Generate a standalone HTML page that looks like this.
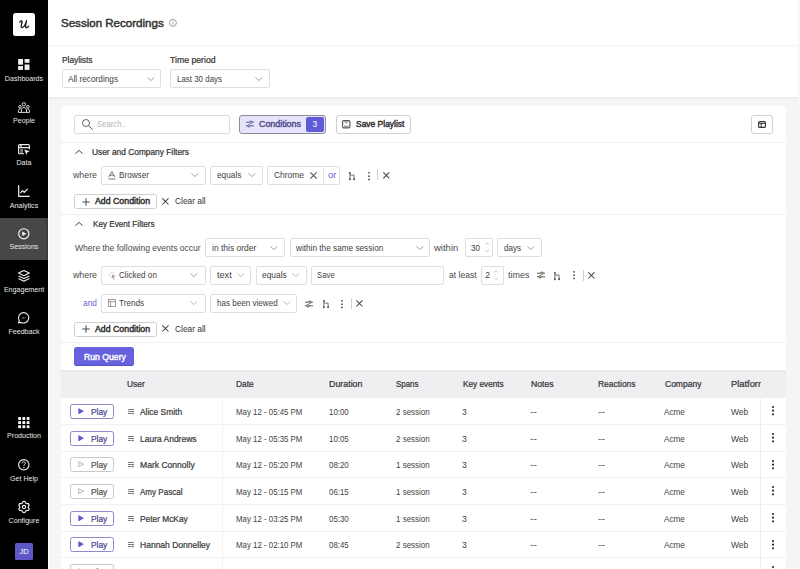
<!DOCTYPE html><html><head><meta charset="utf-8"><style>
*{box-sizing:border-box;margin:0;padding:0}
html,body{width:800px;height:569px;overflow:hidden;background:#f5f5f6;font-family:"Liberation Sans",sans-serif;color:#333}
.a{position:absolute}
.t{position:absolute;white-space:nowrap;font-size:8.1px;line-height:10px;color:#424242}
.b{font-weight:400;color:#333;-webkit-text-stroke:0.22px currentColor}
svg{position:absolute;overflow:visible}
.lb{position:absolute;left:0;width:48px;text-align:center;font-size:7.1px;line-height:9px;color:#e8e8e8;white-space:nowrap}
.box{position:absolute;background:#fff;border:1px solid #dfdfe1;border-radius:2px}
.hr{position:absolute;height:1px;background:#ececee}
</style></head><body>
<div class="a" style="left:0.00px;top:0.00px;width:48.00px;height:569.00px;background:#000;border-radius:0px;"></div>
<div class="a" style="left:0.00px;top:218.00px;width:48.00px;height:42.00px;background:#474747;border-radius:0px;"></div>
<div class="a" style="left:46.00px;top:218.00px;width:1.50px;height:42.00px;background:#3c3c3c;border-radius:0px;"></div>
<div class="a" style="left:13.00px;top:13.20px;width:22.00px;height:22.60px;background:#fff;border-radius:2.5px;"></div>
<svg style="left:18.50px;top:19.50px;" width="11" height="9" viewBox="0 0 11 9"><path d="M0.8 2.2C1.6 0.6 3 0.3 3.1 1.6C3.1 3 2 5.2 2.1 6.6C2.2 8 3.8 7.9 5.2 6.2C6.4 4.6 7.1 2.4 7.5 0.6M7.5 0.6C7 2.8 6.3 5.5 6.6 7C6.9 8.3 8.6 7.8 9.8 6.2" fill="none" stroke="#111" stroke-width="1.25" stroke-linecap="round"/></svg>
<svg style="left:18.00px;top:59.00px;" width="12" height="11" viewBox="0 0 12 11"><rect x="0.1" y="0" width="4.9" height="5.7" fill="#f0f0f0"/><rect x="6.6" y="0" width="4.9" height="3.8" fill="#f0f0f0"/><rect x="0.1" y="7.1" width="4.9" height="3.8" fill="#f0f0f0"/><rect x="6.6" y="5.5" width="4.9" height="5.4" fill="#f0f0f0"/></svg>
<svg style="left:18.00px;top:101.50px;" width="12" height="11" viewBox="0 0 12 11"><g fill="none" stroke="#f0f0f0" stroke-width="0.9"><circle cx="5.9" cy="2.3" r="1.7"/><circle cx="2" cy="4.8" r="1.3"/><circle cx="9.9" cy="4.8" r="1.3"/><path d="M0.4 10.3V8.6C0.4 7.6 1.2 7.2 2.4 7.2M11.5 10.3V8.6C11.5 7.6 10.7 7.2 9.5 7.2M3.4 10.3V7.8C3.4 6.4 4.4 5.6 5.9 5.6C7.4 5.6 8.5 6.4 8.5 7.8V10.3M0.4 10.4H11.5"/></g></svg>
<svg style="left:18.00px;top:143.60px;" width="12" height="11" viewBox="0 0 12 11"><g fill="none" stroke="#f0f0f0" stroke-width="1.1"><path d="M6 9.8H1.8Q0.6 9.8 0.6 8.6V1.8Q0.6 0.6 1.8 0.6H10.2Q11.4 0.6 11.4 1.8V5.2M0.6 3.6H11.4M2.1 2.1H3.9M2.2 6H5M2.2 8H5"/></g><path d="M6.2 5.4L11.8 7.3L9.4 8.2L8.4 10.7Z" fill="#f0f0f0"/></svg>
<svg style="left:18.00px;top:185.00px;" width="12" height="12" viewBox="0 0 12 12"><g fill="none" stroke="#f0f0f0" stroke-width="1.2" stroke-linecap="round"><path d="M0.7 0.5V11.3H11.3"/><path d="M2.7 7.6L4.5 5.6L6.2 7.4L9.3 4.2"/></g></svg>
<svg style="left:18.00px;top:227.50px;" width="12" height="12" viewBox="0 0 12 12"><circle cx="5.8" cy="5.8" r="5.1" fill="none" stroke="#fff" stroke-width="1.1"/><path d="M4.3 3.5L8.2 5.8L4.3 8.1Z" fill="#fff"/></svg>
<svg style="left:18.00px;top:270.00px;" width="12" height="12" viewBox="0 0 12 12"><g fill="none" stroke="#f0f0f0" stroke-width="1.15" stroke-linejoin="round"><path d="M5.9 0.5L11.3 3.1L5.9 5.8L0.5 3.1Z"/><path d="M0.5 5.9L5.9 8.5L11.3 5.9"/><path d="M0.5 8.6L5.9 11.2L11.3 8.6"/></g></svg>
<svg style="left:18.00px;top:311.80px;" width="12" height="12" viewBox="0 0 12 12"><path d="M5.9 0.6A5.2 5.2 0 1 1 3.2 10.4L0.6 10.9L1.3 8.6A5.2 5.2 0 0 1 5.9 0.6Z" fill="none" stroke="#f0f0f0" stroke-width="1.1"/><path d="M3.9 5.9H7.9" stroke="#f0f0f0" stroke-width="0.8" stroke-dasharray="0.8 0.6"/></svg>
<svg style="left:18.00px;top:416.60px;" width="12" height="12" viewBox="0 0 12 12"><rect x="0.20" y="0.10" width="2.8" height="2.8" fill="#fff"/><rect x="0.20" y="4.20" width="2.8" height="2.8" fill="#fff"/><rect x="0.20" y="8.30" width="2.8" height="2.8" fill="#fff"/><rect x="4.40" y="0.10" width="2.8" height="2.8" fill="#fff"/><rect x="4.40" y="4.20" width="2.8" height="2.8" fill="#fff"/><rect x="4.40" y="8.30" width="2.8" height="2.8" fill="#fff"/><rect x="8.70" y="0.10" width="2.8" height="2.8" fill="#fff"/><rect x="8.70" y="4.20" width="2.8" height="2.8" fill="#fff"/><rect x="8.70" y="8.30" width="2.8" height="2.8" fill="#fff"/></svg>
<svg style="left:18.00px;top:458.50px;" width="12" height="12" viewBox="0 0 12 12"><circle cx="5.8" cy="5.8" r="5.2" fill="none" stroke="#f0f0f0" stroke-width="1.1"/><path d="M4.2 4.4C4.2 3.3 4.9 2.8 5.8 2.8C6.8 2.8 7.4 3.4 7.4 4.2C7.4 5.3 5.9 5.4 5.9 6.7V7.2" fill="none" stroke="#f0f0f0" stroke-width="0.95"/><circle cx="5.9" cy="8.8" r="0.7" fill="#f0f0f0"/></svg>
<svg style="left:17.80px;top:501.00px;" width="12" height="12" viewBox="0 0 12 12"><polygon points="6.00,0.40 6.73,0.45 7.29,1.17 7.65,2.03 8.15,2.28 8.62,2.59 9.54,2.46 10.44,2.59 10.85,3.20 11.17,3.86 10.83,4.71 10.26,5.44 10.30,6.00 10.26,6.56 10.83,7.29 11.17,8.14 10.85,8.80 10.44,9.41 9.54,9.54 8.62,9.41 8.15,9.72 7.65,9.97 7.29,10.83 6.73,11.55 6.00,11.60 5.27,11.55 4.71,10.83 4.35,9.97 3.85,9.72 3.38,9.41 2.46,9.54 1.56,9.41 1.15,8.80 0.83,8.14 1.17,7.29 1.74,6.56 1.70,6.00 1.74,5.44 1.17,4.71 0.83,3.86 1.15,3.20 1.56,2.59 2.46,2.46 3.38,2.59 3.85,2.28 4.35,2.03 4.71,1.17 5.27,0.45" fill="none" stroke="#f0f0f0" stroke-width="1.15" stroke-linejoin="round"/><circle cx="6" cy="6" r="1.6" fill="none" stroke="#f0f0f0" stroke-width="1.1"/></svg>
<div class="lb" style="top:75.04px">Dashboards</div>
<div class="lb" style="top:117.04px">People</div>
<div class="lb" style="top:158.64px">Data</div>
<div class="lb" style="top:201.54px">Analytics</div>
<div class="lb" style="top:243.44px">Sessions</div>
<div class="lb" style="top:285.64px">Engagement</div>
<div class="lb" style="top:327.74px">Feedback</div>
<div class="lb" style="top:432.34px">Production</div>
<div class="lb" style="top:474.54px">Get Help</div>
<div class="lb" style="top:516.54px">Configure</div>
<div class="a" style="left:15.20px;top:542.50px;width:17.60px;height:17.30px;background:#5e58c6;border-radius:1.5px;"></div>
<div class="a" style="left:15.2px;top:542.5px;width:17.6px;height:17.3px;color:#fff;font-size:7.6px;line-height:17.3px;text-align:center;letter-spacing:-0.2px">JD</div>
<div class="a" style="left:48.00px;top:0.00px;width:752.00px;height:97.00px;background:#fff;border-radius:0px;"></div>
<div class="a" style="left:48.00px;top:97.00px;width:752.00px;height:1.50px;background:#ececee;border-radius:0px;"></div>
<div class="a" style="left:48.00px;top:0.00px;width:1.00px;height:569.00px;background:#fff;border-radius:0px;"></div>
<div class="a" style="left:48.00px;top:45.00px;width:752.00px;height:1.00px;background:#f3f3f5;border-radius:0px;"></div>
<div class="a" style="left:798.00px;top:0.00px;width:2.00px;height:569.00px;background:#f7f7f8;border-radius:0px;"></div>
<div class="t b" style="left:61.20px;top:18.00px;font-size:10.8px;color:#333;-webkit-text-stroke:0.45px #333;transform:scaleX(1.0694);transform-origin:0 0;">Session Recordings</div>
<svg style="left:168.80px;top:19.20px;" width="8" height="8" viewBox="0 0 8 8"><circle cx="3.9" cy="3.9" r="3.5" fill="none" stroke="#888" stroke-width="0.8"/><path d="M3.9 3.3V6" stroke="#888" stroke-width="0.8"/><circle cx="3.9" cy="2.1" r="0.5" fill="#888"/></svg>
<div class="t b" style="left:61.50px;top:55.00px;font-size:8.6px;transform:scaleX(0.9673);transform-origin:0 0;">Playlists</div>
<div class="box" style="left:61.50px;top:69.00px;width:99.70px;height:19.00px;border-color:#dfdfe1;background:#fff;border-radius:2px;"></div>
<div class="t" style="left:67.70px;top:74.00px;font-size:8.6px;transform:scaleX(0.9623);transform-origin:0 0;">All recordings</div>
<svg style="left:147.00px;top:77.00px;" width="8" height="4" viewBox="0 0 8 4"><polyline points="0.4,0.4 3.8,3.6 7.2,0.4" fill="none" stroke="#9a9a9a" stroke-width="0.9"/></svg>
<div class="t b" style="left:170.10px;top:55.00px;font-size:8.6px;transform:scaleX(1.0119);transform-origin:0 0;">Time period</div>
<div class="box" style="left:170.10px;top:69.00px;width:99.70px;height:19.00px;border-color:#dfdfe1;background:#fff;border-radius:2px;"></div>
<div class="t" style="left:176.80px;top:74.00px;font-size:8.6px;transform:scaleX(0.9234);transform-origin:0 0;">Last 30 days</div>
<svg style="left:255.00px;top:77.00px;" width="8" height="4" viewBox="0 0 8 4"><polyline points="0.4,0.4 3.8,3.6 7.2,0.4" fill="none" stroke="#9a9a9a" stroke-width="0.9"/></svg>
<div class="a" style="left:60.50px;top:106.00px;width:725.90px;height:494.00px;background:#fff;border-radius:3px;"></div>
<div class="box" style="left:74.40px;top:115.00px;width:155.80px;height:19.00px;border-color:#dcdcde;background:#fff;border-radius:2px;"></div>
<svg style="left:82.00px;top:118.80px;" width="12" height="12" viewBox="0 0 12 12"><circle cx="4" cy="4" r="3.5" fill="none" stroke="#555" stroke-width="0.9"/><path d="M6.5 6.5L10.6 10.6" stroke="#555" stroke-width="1"/></svg>
<div class="t" style="left:97.00px;top:119.00px;font-size:8.6px;color:#b5b5b5;transform:scaleX(0.8996);transform-origin:0 0;">Search..</div>
<div class="box" style="left:239.00px;top:115.00px;width:87.00px;height:19.00px;border-color:#8d8b9c;background:#e6e4fb;border-radius:3px;"></div>
<svg style="left:246.00px;top:121.30px;" width="8" height="6" viewBox="0 0 8 6"><path d="M0 1.2H8M0 4.8H8" stroke="#4e4a8c" stroke-width="0.9"/><circle cx="5" cy="1.2" r="1.2" fill="#fff" stroke="#4e4a8c" stroke-width="0.9"/><circle cx="3" cy="4.8" r="1.2" fill="#fff" stroke="#4e4a8c" stroke-width="0.9"/></svg>
<div class="t b" style="left:259.40px;top:119.00px;font-size:8.6px;color:#4e4a8c;-webkit-text-stroke:0.4px currentColor;transform:scaleX(1.0318);transform-origin:0 0;">Conditions</div>
<div class="a" style="left:305.80px;top:117.00px;width:18.00px;height:15.00px;background:#5f5ad6;border-radius:2px;"></div>
<div class="a" style="left:305.8px;top:117px;width:18px;height:15px;color:#fff;font-size:8.6px;line-height:15px;text-align:center">3</div>
<div class="box" style="left:335.70px;top:115.00px;width:75.10px;height:19.00px;border-color:#d0d0d2;background:#fff;border-radius:3px;"></div>
<svg style="left:342.00px;top:120.00px;" width="8.5" height="8.5" viewBox="0 0 8.5 8.5"><rect x="0.6" y="0.6" width="7.3" height="7.3" rx="1.2" fill="none" stroke="#555" stroke-width="1.1"/><path d="M2.2 0.8L4.25 3.2L6.3 0.8M2 6.2H6.5" fill="none" stroke="#777" stroke-width="1"/></svg>
<div class="t b" style="left:355.50px;top:119.00px;font-size:8.6px;color:#2a2a2a;-webkit-text-stroke:0.4px currentColor;transform:scaleX(0.9837);transform-origin:0 0;">Save Playlist</div>
<div class="box" style="left:751.00px;top:115.00px;width:22.40px;height:19.00px;border-color:#d0d0d2;background:#fff;border-radius:3px;"></div>
<svg style="left:758.00px;top:120.80px;" width="8" height="7" viewBox="0 0 8 7"><rect x="0.6" y="0.6" width="6.8" height="5.8" rx="1" fill="none" stroke="#333" stroke-width="1.1"/><path d="M0.6 2.4H7.4M3.2 2.4V6.4" stroke="#333" stroke-width="1"/></svg>
<div class="a" style="left:61.00px;top:142.20px;width:725.40px;height:1.00px;background:#efeff1;border-radius:0px;"></div>
<svg style="left:75.00px;top:150.00px;" width="8" height="4" viewBox="0 0 8 4"><polyline points="0.4,3.6 4,0.4 7.6,3.6" fill="none" stroke="#4a4a4a" stroke-width="1"/></svg>
<div class="t b" style="left:92.40px;top:147.00px;font-size:8.6px;transform:scaleX(0.9717);transform-origin:0 0;">User and Company Filters</div>
<div class="t" style="left:73.10px;top:170.00px;font-size:8.6px;color:#4a4a4a;transform:scaleX(1.0254);transform-origin:0 0;">where</div>
<div class="box" style="left:101.30px;top:166.00px;width:104.60px;height:19.00px;border-color:#dfdfe1;background:#fff;border-radius:2px;"></div>
<svg style="left:108.00px;top:170.50px;" width="8" height="9" viewBox="0 0 8 9"><path d="M0.8 6L3.9 0.6L7 6M1.9 4.2H5.9" fill="none" stroke="#666" stroke-width="0.9"/><path d="M0.3 8H7.5" stroke="#666" stroke-width="0.9"/></svg>
<div class="t" style="left:119.20px;top:170.00px;font-size:8.6px;transform:scaleX(0.9483);transform-origin:0 0;">Browser</div>
<svg style="left:191.00px;top:173.00px;" width="8" height="4" viewBox="0 0 8 4"><polyline points="0.4,0.4 3.8,3.6 7.2,0.4" fill="none" stroke="#9a9a9a" stroke-width="0.9"/></svg>
<div class="box" style="left:210.20px;top:166.00px;width:52.50px;height:19.00px;border-color:#dfdfe1;background:#fff;border-radius:2px;"></div>
<div class="t" style="left:216.60px;top:170.00px;font-size:8.6px;transform:scaleX(0.9673);transform-origin:0 0;">equals</div>
<svg style="left:247.80px;top:173.00px;" width="8" height="4" viewBox="0 0 8 4"><polyline points="0.4,0.4 3.8,3.6 7.2,0.4" fill="none" stroke="#9a9a9a" stroke-width="0.9"/></svg>
<div class="box" style="left:267.40px;top:166.00px;width:73.10px;height:19.00px;border-color:#dfdfe1;background:#fff;border-radius:2px;"></div>
<div class="t" style="left:273.70px;top:170.00px;font-size:8.6px;transform:scaleX(0.9811);transform-origin:0 0;">Chrome</div>
<svg style="left:310.00px;top:172.30px;" width="7" height="7" viewBox="0 0 7 7"><path d="M0.3 0.3L6.7 6.7M6.7 0.3L0.3 6.7" stroke="#555" stroke-width="1.05" fill="none"/></svg>
<div class="a" style="left:323.20px;top:167.00px;width:0.80px;height:16.50px;background:#e4e4e6;border-radius:0px;"></div>
<div class="t" style="left:328.00px;top:170.00px;font-size:8.6px;color:#6a62d8;transform:scaleX(1.1102);transform-origin:0 0;">or</div>
<svg style="left:349.20px;top:171.80px;" width="6" height="8" viewBox="0 0 6 8"><path d="M0.9 1V7.2M0.9 3.1H5.1V7.2" stroke="#4a4a4a" stroke-width="0.75" fill="none"/><circle cx="0.9" cy="0.9" r="0.95" fill="#4a4a4a"/><circle cx="0.9" cy="7.2" r="0.95" fill="#4a4a4a"/><circle cx="5.1" cy="7.2" r="0.95" fill="#4a4a4a"/></svg>
<svg style="left:368.00px;top:171.60px" width="2" height="9" viewBox="0 0 2 9"><circle cx="1" cy="0.85" r="0.85" fill="#444"/><circle cx="1" cy="4.1499999999999995" r="0.85" fill="#444"/><circle cx="1" cy="7.449999999999999" r="0.85" fill="#444"/></svg>
<div class="a" style="left:377.20px;top:170.20px;width:0.80px;height:10.30px;background:#cfcfcf;border-radius:0px;"></div>
<svg style="left:382.80px;top:172.40px;" width="6.6" height="6.6" viewBox="0 0 6.6 6.6"><path d="M0.3 0.3L6.3 6.3M6.3 0.3L0.3 6.3" stroke="#444" stroke-width="1.05" fill="none"/></svg>
<div class="box" style="left:74.20px;top:194.00px;width:82.60px;height:15.00px;border-color:#cfcfd1;background:#fff;border-radius:2.5px;"></div>
<svg style="left:81.50px;top:197.60px;" width="8" height="8" viewBox="0 0 8 8"><path d="M4 0.3V7.7M0.3 4H7.7" stroke="#333" stroke-width="0.9"/></svg>
<div class="t b" style="left:95.00px;top:196.00px;font-size:8.6px;color:#2a2a2a;-webkit-text-stroke:0.4px currentColor;transform:scaleX(1.0204);transform-origin:0 0;">Add Condition</div>
<svg style="left:162.20px;top:198.00px;" width="6.8" height="6.8" viewBox="0 0 6.8 6.8"><path d="M0.3 0.3L6.5 6.5M6.5 0.3L0.3 6.5" stroke="#444" stroke-width="1.05" fill="none"/></svg>
<div class="t" style="left:174.80px;top:196.00px;font-size:8.6px;color:#333;transform:scaleX(0.9736);transform-origin:0 0;">Clear all</div>
<div class="a" style="left:61.00px;top:213.80px;width:725.40px;height:1.00px;background:#efeff1;border-radius:0px;"></div>
<svg style="left:75.00px;top:222.30px;" width="8" height="4" viewBox="0 0 8 4"><polyline points="0.4,3.6 4,0.4 7.6,3.6" fill="none" stroke="#4a4a4a" stroke-width="1"/></svg>
<div class="t b" style="left:92.80px;top:219.00px;font-size:8.6px;transform:scaleX(0.9468);transform-origin:0 0;">Key Event Filters</div>
<div class="t" style="left:74.80px;top:243.00px;font-size:8.6px;color:#4a4a4a;transform:scaleX(0.9929);transform-origin:0 0;">Where the following events occur</div>
<div class="box" style="left:205.40px;top:238.00px;width:80.00px;height:19.00px;border-color:#dfdfe1;background:#fff;border-radius:2px;"></div>
<div class="t" style="left:212.30px;top:243.00px;font-size:8.6px;transform:scaleX(0.9887);transform-origin:0 0;">in this order</div>
<svg style="left:270.00px;top:245.50px;" width="8" height="4" viewBox="0 0 8 4"><polyline points="0.4,0.4 3.8,3.6 7.2,0.4" fill="none" stroke="#9a9a9a" stroke-width="0.9"/></svg>
<div class="box" style="left:289.50px;top:238.00px;width:140.00px;height:19.00px;border-color:#dfdfe1;background:#fff;border-radius:2px;"></div>
<div class="t" style="left:295.90px;top:243.00px;font-size:8.6px;transform:scaleX(0.9569);transform-origin:0 0;">within the same session</div>
<svg style="left:415.50px;top:245.50px;" width="8" height="4" viewBox="0 0 8 4"><polyline points="0.4,0.4 3.8,3.6 7.2,0.4" fill="none" stroke="#9a9a9a" stroke-width="0.9"/></svg>
<div class="t" style="left:434.30px;top:243.00px;font-size:8.6px;color:#4a4a4a;transform:scaleX(1.1053);transform-origin:0 0;">within</div>
<div class="box" style="left:465.20px;top:238.00px;width:27.70px;height:19.00px;border-color:#dfdfe1;background:#fff;border-radius:2px;"></div>
<div class="t" style="left:470.70px;top:243.00px;font-size:8.6px;transform:scaleX(0.9412);transform-origin:0 0;">30</div>
<svg style="left:484.50px;top:242.00px;" width="5" height="11" viewBox="0 0 5 11"><polyline points="0.5,2.5 2.2,0.8 3.9,2.5" fill="none" stroke="#aaa" stroke-width="0.7"/><polyline points="0.5,8 2.2,9.7 3.9,8" fill="none" stroke="#aaa" stroke-width="0.7"/></svg>
<div class="box" style="left:497.10px;top:238.00px;width:44.80px;height:19.00px;border-color:#dfdfe1;background:#fff;border-radius:2px;"></div>
<div class="t" style="left:504.00px;top:243.00px;font-size:8.6px;transform:scaleX(0.9418);transform-origin:0 0;">days</div>
<svg style="left:527.00px;top:245.50px;" width="8" height="4" viewBox="0 0 8 4"><polyline points="0.4,0.4 3.8,3.6 7.2,0.4" fill="none" stroke="#9a9a9a" stroke-width="0.9"/></svg>
<div class="t" style="left:72.90px;top:270.00px;font-size:8.6px;color:#4a4a4a;transform:scaleX(1.0254);transform-origin:0 0;">where</div>
<div class="box" style="left:101.30px;top:266.00px;width:104.60px;height:19.00px;border-color:#dfdfe1;background:#fff;border-radius:2px;"></div>
<svg style="left:108.80px;top:271.60px;" width="7" height="8" viewBox="0 0 7 8"><circle cx="3.2" cy="3.2" r="2.6" fill="none" stroke="#b5b5b5" stroke-width="0.8" stroke-dasharray="1.2 0.8"/><path d="M3 2.6L6.2 4.4L4.6 4.9L5.6 7.4L4.8 7.7L3.9 5.3L3 6.3Z" fill="#999"/></svg>
<div class="t" style="left:118.80px;top:270.00px;font-size:8.6px;transform:scaleX(0.9445);transform-origin:0 0;">Clicked on</div>
<svg style="left:190.30px;top:273.30px;" width="8" height="4" viewBox="0 0 8 4"><polyline points="0.4,0.4 3.8,3.6 7.2,0.4" fill="none" stroke="#9a9a9a" stroke-width="0.9"/></svg>
<div class="box" style="left:210.00px;top:266.00px;width:40.90px;height:19.00px;border-color:#dfdfe1;background:#fff;border-radius:2px;"></div>
<div class="t" style="left:216.60px;top:270.00px;font-size:8.6px;transform:scaleX(1.0607);transform-origin:0 0;">text</div>
<svg style="left:236.80px;top:273.30px;" width="8" height="4" viewBox="0 0 8 4"><polyline points="0.4,0.4 3.8,3.6 7.2,0.4" fill="none" stroke="#b0b0b0" stroke-width="0.9"/></svg>
<div class="box" style="left:255.50px;top:266.00px;width:51.30px;height:19.00px;border-color:#dfdfe1;background:#fff;border-radius:2px;"></div>
<div class="t" style="left:262.20px;top:270.00px;font-size:8.6px;transform:scaleX(0.9752);transform-origin:0 0;">equals</div>
<svg style="left:292.00px;top:273.30px;" width="8" height="4" viewBox="0 0 8 4"><polyline points="0.4,0.4 3.8,3.6 7.2,0.4" fill="none" stroke="#b0b0b0" stroke-width="0.9"/></svg>
<div class="box" style="left:310.50px;top:266.00px;width:133.50px;height:19.00px;border-color:#dfdfe1;background:#fff;border-radius:2px;"></div>
<div class="t" style="left:317.00px;top:270.00px;font-size:8.6px;transform:scaleX(0.9033);transform-origin:0 0;">Save</div>
<div class="t" style="left:448.50px;top:270.00px;font-size:8.6px;color:#4a4a4a;transform:scaleX(0.9993);transform-origin:0 0;">at least</div>
<div class="box" style="left:480.50px;top:266.00px;width:23.20px;height:19.00px;border-color:#dfdfe1;background:#fff;border-radius:2px;"></div>
<div class="t" style="left:485.20px;top:270.00px;font-size:8.6px;">2</div>
<svg style="left:493.60px;top:270.00px;" width="5" height="11" viewBox="0 0 5 11"><polyline points="0.5,2.5 2.2,0.8 3.9,2.5" fill="none" stroke="#aaa" stroke-width="0.7"/><polyline points="0.5,8 2.2,9.7 3.9,8" fill="none" stroke="#aaa" stroke-width="0.7"/></svg>
<div class="t" style="left:507.70px;top:270.00px;font-size:8.6px;color:#4a4a4a;transform:scaleX(1.0415);transform-origin:0 0;">times</div>
<svg style="left:536.80px;top:272.30px;" width="8" height="6" viewBox="0 0 8 6"><path d="M0 1.2H8M0 4.8H8" stroke="#444" stroke-width="0.9"/><circle cx="5" cy="1.2" r="1.2" fill="#fff" stroke="#444" stroke-width="0.9"/><circle cx="3" cy="4.8" r="1.2" fill="#fff" stroke="#444" stroke-width="0.9"/></svg>
<svg style="left:554.20px;top:271.80px;" width="6" height="8" viewBox="0 0 6 8"><path d="M0.9 1V7.2M0.9 3.1H5.1V7.2" stroke="#4a4a4a" stroke-width="0.75" fill="none"/><circle cx="0.9" cy="0.9" r="0.95" fill="#4a4a4a"/><circle cx="0.9" cy="7.2" r="0.95" fill="#4a4a4a"/><circle cx="5.1" cy="7.2" r="0.95" fill="#4a4a4a"/></svg>
<svg style="left:572.50px;top:271.40px" width="2" height="9" viewBox="0 0 2 9"><circle cx="1" cy="0.85" r="0.85" fill="#444"/><circle cx="1" cy="4.1499999999999995" r="0.85" fill="#444"/><circle cx="1" cy="7.449999999999999" r="0.85" fill="#444"/></svg>
<div class="a" style="left:583.00px;top:270.00px;width:0.80px;height:10.80px;background:#cfcfcf;border-radius:0px;"></div>
<svg style="left:588.20px;top:272.20px;" width="6.8" height="6.8" viewBox="0 0 6.8 6.8"><path d="M0.3 0.3L6.5 6.5M6.5 0.3L0.3 6.5" stroke="#444" stroke-width="1.05" fill="none"/></svg>
<div class="t" style="left:82.80px;top:298.00px;font-size:8.6px;color:#6a62d8;transform:scaleX(0.9691);transform-origin:0 0;">and</div>
<div class="box" style="left:101.30px;top:294.00px;width:104.60px;height:19.00px;border-color:#dfdfe1;background:#fff;border-radius:2px;"></div>
<svg style="left:108.00px;top:299.30px;" width="8" height="8" viewBox="0 0 8 8"><rect x="0.5" y="0.5" width="7" height="7" fill="none" stroke="#888" stroke-width="0.8"/><path d="M0.5 2.6H7.5M2.6 2.6V7.5" stroke="#888" stroke-width="0.8"/></svg>
<div class="t" style="left:119.40px;top:298.00px;font-size:8.6px;transform:scaleX(0.9494);transform-origin:0 0;">Trends</div>
<svg style="left:190.30px;top:301.30px;" width="8" height="4" viewBox="0 0 8 4"><polyline points="0.4,0.4 3.8,3.6 7.2,0.4" fill="none" stroke="#b0b0b0" stroke-width="0.9"/></svg>
<div class="box" style="left:210.00px;top:294.00px;width:87.30px;height:19.00px;border-color:#dfdfe1;background:#fff;border-radius:2px;"></div>
<div class="t" style="left:216.90px;top:298.00px;font-size:8.6px;transform:scaleX(0.9411);transform-origin:0 0;">has been viewed</div>
<svg style="left:282.90px;top:301.30px;" width="8" height="4" viewBox="0 0 8 4"><polyline points="0.4,0.4 3.8,3.6 7.2,0.4" fill="none" stroke="#b0b0b0" stroke-width="0.9"/></svg>
<svg style="left:305.00px;top:300.60px;" width="8" height="6" viewBox="0 0 8 6"><path d="M0 1.2H8M0 4.8H8" stroke="#444" stroke-width="0.9"/><circle cx="5" cy="1.2" r="1.2" fill="#fff" stroke="#444" stroke-width="0.9"/><circle cx="3" cy="4.8" r="1.2" fill="#fff" stroke="#444" stroke-width="0.9"/></svg>
<svg style="left:322.90px;top:299.80px;" width="6" height="8" viewBox="0 0 6 8"><path d="M0.9 1V7.2M0.9 3.1H5.1V7.2" stroke="#4a4a4a" stroke-width="0.75" fill="none"/><circle cx="0.9" cy="0.9" r="0.95" fill="#4a4a4a"/><circle cx="0.9" cy="7.2" r="0.95" fill="#4a4a4a"/><circle cx="5.1" cy="7.2" r="0.95" fill="#4a4a4a"/></svg>
<svg style="left:340.90px;top:299.60px" width="2" height="9" viewBox="0 0 2 9"><circle cx="1" cy="0.85" r="0.85" fill="#444"/><circle cx="1" cy="4.1499999999999995" r="0.85" fill="#444"/><circle cx="1" cy="7.449999999999999" r="0.85" fill="#444"/></svg>
<div class="a" style="left:350.70px;top:298.00px;width:0.80px;height:10.80px;background:#cfcfcf;border-radius:0px;"></div>
<svg style="left:356.20px;top:300.20px;" width="6.8" height="6.8" viewBox="0 0 6.8 6.8"><path d="M0.3 0.3L6.5 6.5M6.5 0.3L0.3 6.5" stroke="#444" stroke-width="1.05" fill="none"/></svg>
<div class="box" style="left:74.20px;top:322.00px;width:82.60px;height:15.00px;border-color:#cfcfd1;background:#fff;border-radius:2.5px;"></div>
<svg style="left:81.50px;top:324.90px;" width="8" height="8" viewBox="0 0 8 8"><path d="M4 0.3V7.7M0.3 4H7.7" stroke="#333" stroke-width="0.9"/></svg>
<div class="t b" style="left:95.00px;top:324.00px;font-size:8.6px;color:#2a2a2a;-webkit-text-stroke:0.4px currentColor;transform:scaleX(1.0204);transform-origin:0 0;">Add Condition</div>
<svg style="left:162.20px;top:325.30px;" width="6.8" height="6.8" viewBox="0 0 6.8 6.8"><path d="M0.3 0.3L6.5 6.5M6.5 0.3L0.3 6.5" stroke="#444" stroke-width="1.05" fill="none"/></svg>
<div class="t" style="left:174.80px;top:324.00px;font-size:8.6px;color:#333;transform:scaleX(0.9736);transform-origin:0 0;">Clear all</div>
<div class="a" style="left:61.00px;top:342.00px;width:725.40px;height:1.00px;background:#efeff1;border-radius:0px;"></div>
<div class="a" style="left:74.20px;top:347.00px;width:59.60px;height:19.00px;background:#6661de;border-radius:3px;box-shadow:inset 0 -1px 0 #5650c4"></div>
<div class="t b" style="left:83.60px;top:352.00px;font-size:8.6px;color:#fff;-webkit-text-stroke:0.4px currentColor;transform:scaleX(1.0081);transform-origin:0 0;">Run Query</div>
<div class="a" style="left:60.50px;top:370.00px;width:725.90px;height:27.50px;background:#efeff1;border-radius:0px;"></div>
<div class="a" style="left:60.50px;top:370.00px;width:725.90px;height:2.00px;background:#eaeaec;border-radius:0px;"></div>
<div class="t b" style="left:126.50px;top:379.00px;font-size:8.6px;color:#333;transform:scaleX(0.9859);transform-origin:0 0;">User</div>
<div class="t b" style="left:235.80px;top:379.00px;font-size:8.6px;color:#333;transform:scaleX(0.9804);transform-origin:0 0;">Date</div>
<div class="t b" style="left:329.30px;top:379.00px;font-size:8.6px;color:#333;transform:scaleX(1.0297);transform-origin:0 0;">Duration</div>
<div class="t b" style="left:395.80px;top:379.00px;font-size:8.6px;color:#333;transform:scaleX(0.9210);transform-origin:0 0;">Spans</div>
<div class="t b" style="left:462.50px;top:379.00px;font-size:8.6px;color:#333;transform:scaleX(0.9573);transform-origin:0 0;">Key events</div>
<div class="t b" style="left:531.20px;top:379.00px;font-size:8.6px;color:#333;transform:scaleX(1.0110);transform-origin:0 0;">Notes</div>
<div class="t b" style="left:597.70px;top:379.00px;font-size:8.6px;color:#333;transform:scaleX(0.9812);transform-origin:0 0;">Reactions</div>
<div class="t b" style="left:664.60px;top:379.00px;font-size:8.6px;color:#333;transform:scaleX(0.9896);transform-origin:0 0;">Company</div>
<div class="a" style="left:731px;top:375px;width:29.6px;height:14px;overflow:hidden">
<div class="t b" style="left:0.00px;top:4.00px;font-size:8.6px;color:#333;transform:scaleX(1.0844);transform-origin:0 0;">Platform</div>
</div>
<div class="a" style="left:60.50px;top:424.00px;width:725.90px;height:1.00px;background:#f0f0f2;border-radius:0px;"></div>
<div class="box" style="left:70.20px;top:404.00px;width:43.60px;height:15.00px;border-color:#8f8bc8;background:#fff;border-radius:2.5px;"></div>
<svg style="left:78.30px;top:408.40px;" width="6" height="7" viewBox="0 0 6 7"><path d="M0.3 0.9Q0.3 -0.1 1.2 0.4L5.4 2.7Q6 3.1 5.4 3.5L1.2 5.9Q0.3 6.4 0.3 5.4Z" fill="#5f59d6"/></svg>
<div class="t b" style="left:90.90px;top:407.00px;font-size:8.6px;color:#4b4690;transform:scaleX(0.9750);transform-origin:0 0;">Play</div>
<svg style="left:128.00px;top:409.10px;" width="6.5" height="6" viewBox="0 0 6.5 6"><path d="M0 0.5H6M0 2.5H6M0 4.5H3.5" stroke="#555" stroke-width="0.8"/><path d="M4.2 3.6L6.2 4.6L4.2 5.6Z" fill="#555"/></svg>
<div class="t b" style="left:140.00px;top:407.00px;font-size:8.6px;color:#3a3a3a;transform:scaleX(0.9794);transform-origin:0 0;">Alice Smith</div>
<div class="t" style="left:235.80px;top:407.00px;font-size:8.6px;transform:scaleX(0.9145);transform-origin:0 0;">May 12 - 05:45 PM</div>
<div class="t" style="left:329.40px;top:407.00px;font-size:8.6px;transform:scaleX(0.9156);transform-origin:0 0;">10:00</div>
<div class="t" style="left:395.60px;top:407.00px;font-size:8.6px;transform:scaleX(0.9281);transform-origin:0 0;">2 session</div>
<div class="t" style="left:462.00px;top:407.00px;font-size:8.6px;">3</div>
<div class="t" style="left:530.00px;top:407.00px;font-size:8.6px;transform:scaleX(1.2000);transform-origin:0 0;">--</div>
<div class="t" style="left:597.70px;top:407.00px;font-size:8.6px;transform:scaleX(1.2000);transform-origin:0 0;">--</div>
<div class="t" style="left:664.40px;top:407.00px;font-size:8.6px;transform:scaleX(0.9514);transform-origin:0 0;">Acme</div>
<div class="t" style="left:730.90px;top:407.00px;font-size:8.6px;transform:scaleX(0.9820);transform-origin:0 0;">Web</div>
<svg style="left:772.40px;top:406.30px" width="2" height="9" viewBox="0 0 2 9"><circle cx="1" cy="1.1" r="1.1" fill="#333"/><circle cx="1" cy="4.7" r="1.1" fill="#333"/><circle cx="1" cy="8.3" r="1.1" fill="#333"/></svg>
<div class="a" style="left:60.50px;top:451.00px;width:725.90px;height:1.00px;background:#f0f0f2;border-radius:0px;"></div>
<div class="box" style="left:70.20px;top:431.00px;width:43.60px;height:15.00px;border-color:#8f8bc8;background:#fff;border-radius:2.5px;"></div>
<svg style="left:78.30px;top:435.40px;" width="6" height="7" viewBox="0 0 6 7"><path d="M0.3 0.9Q0.3 -0.1 1.2 0.4L5.4 2.7Q6 3.1 5.4 3.5L1.2 5.9Q0.3 6.4 0.3 5.4Z" fill="#5f59d6"/></svg>
<div class="t b" style="left:90.90px;top:434.00px;font-size:8.6px;color:#4b4690;transform:scaleX(0.9750);transform-origin:0 0;">Play</div>
<svg style="left:128.00px;top:435.77px;" width="6.5" height="6" viewBox="0 0 6.5 6"><path d="M0 0.5H6M0 2.5H6M0 4.5H3.5" stroke="#555" stroke-width="0.8"/><path d="M4.2 3.6L6.2 4.6L4.2 5.6Z" fill="#555"/></svg>
<div class="t b" style="left:140.00px;top:434.00px;font-size:8.6px;color:#3a3a3a;transform:scaleX(0.9856);transform-origin:0 0;">Laura Andrews</div>
<div class="t" style="left:235.80px;top:434.00px;font-size:8.6px;transform:scaleX(0.9145);transform-origin:0 0;">May 12 - 05:35 PM</div>
<div class="t" style="left:329.40px;top:434.00px;font-size:8.6px;transform:scaleX(0.9156);transform-origin:0 0;">10:05</div>
<div class="t" style="left:395.60px;top:434.00px;font-size:8.6px;transform:scaleX(0.9281);transform-origin:0 0;">2 session</div>
<div class="t" style="left:462.00px;top:434.00px;font-size:8.6px;">3</div>
<div class="t" style="left:530.00px;top:434.00px;font-size:8.6px;transform:scaleX(1.2000);transform-origin:0 0;">--</div>
<div class="t" style="left:597.70px;top:434.00px;font-size:8.6px;transform:scaleX(1.2000);transform-origin:0 0;">--</div>
<div class="t" style="left:664.40px;top:434.00px;font-size:8.6px;transform:scaleX(0.9514);transform-origin:0 0;">Acme</div>
<div class="t" style="left:730.90px;top:434.00px;font-size:8.6px;transform:scaleX(0.9820);transform-origin:0 0;">Web</div>
<svg style="left:772.40px;top:432.97px" width="2" height="9" viewBox="0 0 2 9"><circle cx="1" cy="1.1" r="1.1" fill="#333"/><circle cx="1" cy="4.7" r="1.1" fill="#333"/><circle cx="1" cy="8.3" r="1.1" fill="#333"/></svg>
<div class="a" style="left:60.50px;top:477.00px;width:725.90px;height:1.00px;background:#f0f0f2;border-radius:0px;"></div>
<div class="box" style="left:70.20px;top:457.00px;width:43.60px;height:15.00px;border-color:#c9c9cb;background:#fff;border-radius:2.5px;"></div>
<svg style="left:78.30px;top:461.40px;" width="6" height="7" viewBox="0 0 6 7"><path d="M0.7 0.7L5.5 3.1L0.7 5.6Z" fill="none" stroke="#a8a8a8" stroke-width="0.85" stroke-linejoin="round"/></svg>
<div class="t b" style="left:90.90px;top:460.00px;font-size:8.6px;color:#555;transform:scaleX(0.9750);transform-origin:0 0;">Play</div>
<svg style="left:128.00px;top:462.44px;" width="6.5" height="6" viewBox="0 0 6.5 6"><path d="M0 0.5H6M0 2.5H6M0 4.5H3.5" stroke="#555" stroke-width="0.8"/><path d="M4.2 3.6L6.2 4.6L4.2 5.6Z" fill="#555"/></svg>
<div class="t b" style="left:140.00px;top:460.00px;font-size:8.6px;color:#3a3a3a;transform:scaleX(0.9957);transform-origin:0 0;">Mark Connolly</div>
<div class="t" style="left:235.80px;top:460.00px;font-size:8.6px;transform:scaleX(0.9145);transform-origin:0 0;">May 12 - 05:20 PM</div>
<div class="t" style="left:329.40px;top:460.00px;font-size:8.6px;transform:scaleX(0.9156);transform-origin:0 0;">08:20</div>
<div class="t" style="left:395.60px;top:460.00px;font-size:8.6px;transform:scaleX(0.9281);transform-origin:0 0;">1 session</div>
<div class="t" style="left:462.00px;top:460.00px;font-size:8.6px;">3</div>
<div class="t" style="left:530.00px;top:460.00px;font-size:8.6px;transform:scaleX(1.2000);transform-origin:0 0;">--</div>
<div class="t" style="left:597.70px;top:460.00px;font-size:8.6px;transform:scaleX(1.2000);transform-origin:0 0;">--</div>
<div class="t" style="left:664.40px;top:460.00px;font-size:8.6px;transform:scaleX(0.9514);transform-origin:0 0;">Acme</div>
<div class="t" style="left:730.90px;top:460.00px;font-size:8.6px;transform:scaleX(0.9820);transform-origin:0 0;">Web</div>
<svg style="left:772.40px;top:459.64px" width="2" height="9" viewBox="0 0 2 9"><circle cx="1" cy="1.1" r="1.1" fill="#333"/><circle cx="1" cy="4.7" r="1.1" fill="#333"/><circle cx="1" cy="8.3" r="1.1" fill="#333"/></svg>
<div class="a" style="left:60.50px;top:504.00px;width:725.90px;height:1.00px;background:#f0f0f2;border-radius:0px;"></div>
<div class="box" style="left:70.20px;top:484.00px;width:43.60px;height:15.00px;border-color:#c9c9cb;background:#fff;border-radius:2.5px;"></div>
<svg style="left:78.30px;top:488.40px;" width="6" height="7" viewBox="0 0 6 7"><path d="M0.7 0.7L5.5 3.1L0.7 5.6Z" fill="none" stroke="#a8a8a8" stroke-width="0.85" stroke-linejoin="round"/></svg>
<div class="t b" style="left:90.90px;top:487.00px;font-size:8.6px;color:#555;transform:scaleX(0.9750);transform-origin:0 0;">Play</div>
<svg style="left:128.00px;top:489.11px;" width="6.5" height="6" viewBox="0 0 6.5 6"><path d="M0 0.5H6M0 2.5H6M0 4.5H3.5" stroke="#555" stroke-width="0.8"/><path d="M4.2 3.6L6.2 4.6L4.2 5.6Z" fill="#555"/></svg>
<div class="t b" style="left:140.00px;top:487.00px;font-size:8.6px;color:#3a3a3a;transform:scaleX(0.9366);transform-origin:0 0;">Amy Pascal</div>
<div class="t" style="left:235.80px;top:487.00px;font-size:8.6px;transform:scaleX(0.9145);transform-origin:0 0;">May 12 - 05:15 PM</div>
<div class="t" style="left:329.40px;top:487.00px;font-size:8.6px;transform:scaleX(0.9156);transform-origin:0 0;">06:15</div>
<div class="t" style="left:395.60px;top:487.00px;font-size:8.6px;transform:scaleX(0.9281);transform-origin:0 0;">1 session</div>
<div class="t" style="left:462.00px;top:487.00px;font-size:8.6px;">3</div>
<div class="t" style="left:530.00px;top:487.00px;font-size:8.6px;transform:scaleX(1.2000);transform-origin:0 0;">--</div>
<div class="t" style="left:597.70px;top:487.00px;font-size:8.6px;transform:scaleX(1.2000);transform-origin:0 0;">--</div>
<div class="t" style="left:664.40px;top:487.00px;font-size:8.6px;transform:scaleX(0.9514);transform-origin:0 0;">Acme</div>
<div class="t" style="left:730.90px;top:487.00px;font-size:8.6px;transform:scaleX(0.9820);transform-origin:0 0;">Web</div>
<svg style="left:772.40px;top:486.31px" width="2" height="9" viewBox="0 0 2 9"><circle cx="1" cy="1.1" r="1.1" fill="#333"/><circle cx="1" cy="4.7" r="1.1" fill="#333"/><circle cx="1" cy="8.3" r="1.1" fill="#333"/></svg>
<div class="a" style="left:60.50px;top:531.00px;width:725.90px;height:1.00px;background:#f0f0f2;border-radius:0px;"></div>
<div class="box" style="left:70.20px;top:511.00px;width:43.60px;height:15.00px;border-color:#8f8bc8;background:#fff;border-radius:2.5px;"></div>
<svg style="left:78.30px;top:515.40px;" width="6" height="7" viewBox="0 0 6 7"><path d="M0.3 0.9Q0.3 -0.1 1.2 0.4L5.4 2.7Q6 3.1 5.4 3.5L1.2 5.9Q0.3 6.4 0.3 5.4Z" fill="#5f59d6"/></svg>
<div class="t b" style="left:90.90px;top:514.00px;font-size:8.6px;color:#4b4690;transform:scaleX(0.9750);transform-origin:0 0;">Play</div>
<svg style="left:128.00px;top:515.78px;" width="6.5" height="6" viewBox="0 0 6.5 6"><path d="M0 0.5H6M0 2.5H6M0 4.5H3.5" stroke="#555" stroke-width="0.8"/><path d="M4.2 3.6L6.2 4.6L4.2 5.6Z" fill="#555"/></svg>
<div class="t b" style="left:140.00px;top:514.00px;font-size:8.6px;color:#3a3a3a;transform:scaleX(0.9695);transform-origin:0 0;">Peter McKay</div>
<div class="t" style="left:235.80px;top:514.00px;font-size:8.6px;transform:scaleX(0.9145);transform-origin:0 0;">May 12 - 03:25 PM</div>
<div class="t" style="left:329.40px;top:514.00px;font-size:8.6px;transform:scaleX(0.9156);transform-origin:0 0;">05:30</div>
<div class="t" style="left:395.60px;top:514.00px;font-size:8.6px;transform:scaleX(0.9281);transform-origin:0 0;">1 session</div>
<div class="t" style="left:462.00px;top:514.00px;font-size:8.6px;">3</div>
<div class="t" style="left:530.00px;top:514.00px;font-size:8.6px;transform:scaleX(1.2000);transform-origin:0 0;">--</div>
<div class="t" style="left:597.70px;top:514.00px;font-size:8.6px;transform:scaleX(1.2000);transform-origin:0 0;">--</div>
<div class="t" style="left:664.40px;top:514.00px;font-size:8.6px;transform:scaleX(0.9514);transform-origin:0 0;">Acme</div>
<div class="t" style="left:730.90px;top:514.00px;font-size:8.6px;transform:scaleX(0.9820);transform-origin:0 0;">Web</div>
<svg style="left:772.40px;top:512.98px" width="2" height="9" viewBox="0 0 2 9"><circle cx="1" cy="1.1" r="1.1" fill="#333"/><circle cx="1" cy="4.7" r="1.1" fill="#333"/><circle cx="1" cy="8.3" r="1.1" fill="#333"/></svg>
<div class="a" style="left:60.50px;top:557.00px;width:725.90px;height:1.00px;background:#f0f0f2;border-radius:0px;"></div>
<div class="box" style="left:70.20px;top:537.00px;width:43.60px;height:15.00px;border-color:#8f8bc8;background:#fff;border-radius:2.5px;"></div>
<svg style="left:78.30px;top:541.40px;" width="6" height="7" viewBox="0 0 6 7"><path d="M0.3 0.9Q0.3 -0.1 1.2 0.4L5.4 2.7Q6 3.1 5.4 3.5L1.2 5.9Q0.3 6.4 0.3 5.4Z" fill="#5f59d6"/></svg>
<div class="t b" style="left:90.90px;top:540.00px;font-size:8.6px;color:#4b4690;transform:scaleX(0.9750);transform-origin:0 0;">Play</div>
<svg style="left:128.00px;top:542.45px;" width="6.5" height="6" viewBox="0 0 6.5 6"><path d="M0 0.5H6M0 2.5H6M0 4.5H3.5" stroke="#555" stroke-width="0.8"/><path d="M4.2 3.6L6.2 4.6L4.2 5.6Z" fill="#555"/></svg>
<div class="t b" style="left:140.00px;top:540.00px;font-size:8.6px;color:#3a3a3a;transform:scaleX(0.9913);transform-origin:0 0;">Hannah Donnelley</div>
<div class="t" style="left:235.80px;top:540.00px;font-size:8.6px;transform:scaleX(0.9145);transform-origin:0 0;">May 12 - 02:10 PM</div>
<div class="t" style="left:329.40px;top:540.00px;font-size:8.6px;transform:scaleX(0.9156);transform-origin:0 0;">08:45</div>
<div class="t" style="left:395.60px;top:540.00px;font-size:8.6px;transform:scaleX(0.9281);transform-origin:0 0;">2 session</div>
<div class="t" style="left:462.00px;top:540.00px;font-size:8.6px;">3</div>
<div class="t" style="left:530.00px;top:540.00px;font-size:8.6px;transform:scaleX(1.2000);transform-origin:0 0;">--</div>
<div class="t" style="left:597.70px;top:540.00px;font-size:8.6px;transform:scaleX(1.2000);transform-origin:0 0;">--</div>
<div class="t" style="left:664.40px;top:540.00px;font-size:8.6px;transform:scaleX(0.9514);transform-origin:0 0;">Acme</div>
<div class="t" style="left:730.90px;top:540.00px;font-size:8.6px;transform:scaleX(0.9820);transform-origin:0 0;">Web</div>
<svg style="left:772.40px;top:539.65px" width="2" height="9" viewBox="0 0 2 9"><circle cx="1" cy="1.1" r="1.1" fill="#333"/><circle cx="1" cy="4.7" r="1.1" fill="#333"/><circle cx="1" cy="8.3" r="1.1" fill="#333"/></svg>
<div class="a" style="left:60.50px;top:584.00px;width:725.90px;height:1.00px;background:#f0f0f2;border-radius:0px;"></div>
<div class="box" style="left:70.20px;top:564.00px;width:43.60px;height:15.00px;border-color:#c9c9cb;background:#fff;border-radius:2.5px;"></div>
<svg style="left:78.30px;top:568.40px;" width="6" height="7" viewBox="0 0 6 7"><path d="M0.7 0.7L5.5 3.1L0.7 5.6Z" fill="none" stroke="#a8a8a8" stroke-width="0.85" stroke-linejoin="round"/></svg>
<div class="t b" style="left:90.90px;top:567.00px;font-size:8.6px;color:#555;transform:scaleX(0.9750);transform-origin:0 0;">Play</div>
<svg style="left:772.40px;top:566.32px" width="2" height="9" viewBox="0 0 2 9"><circle cx="1" cy="1.1" r="1.1" fill="#333"/><circle cx="1" cy="4.7" r="1.1" fill="#333"/><circle cx="1" cy="8.3" r="1.1" fill="#333"/></svg>
<div class="a" style="left:221.70px;top:397.30px;width:0.80px;height:171.70px;background:#f2f2f4;border-radius:0px;"></div>
<div class="a" style="left:760.40px;top:397.30px;width:0.80px;height:171.70px;background:#f0f0f2;border-radius:0px;"></div>
</body></html>
